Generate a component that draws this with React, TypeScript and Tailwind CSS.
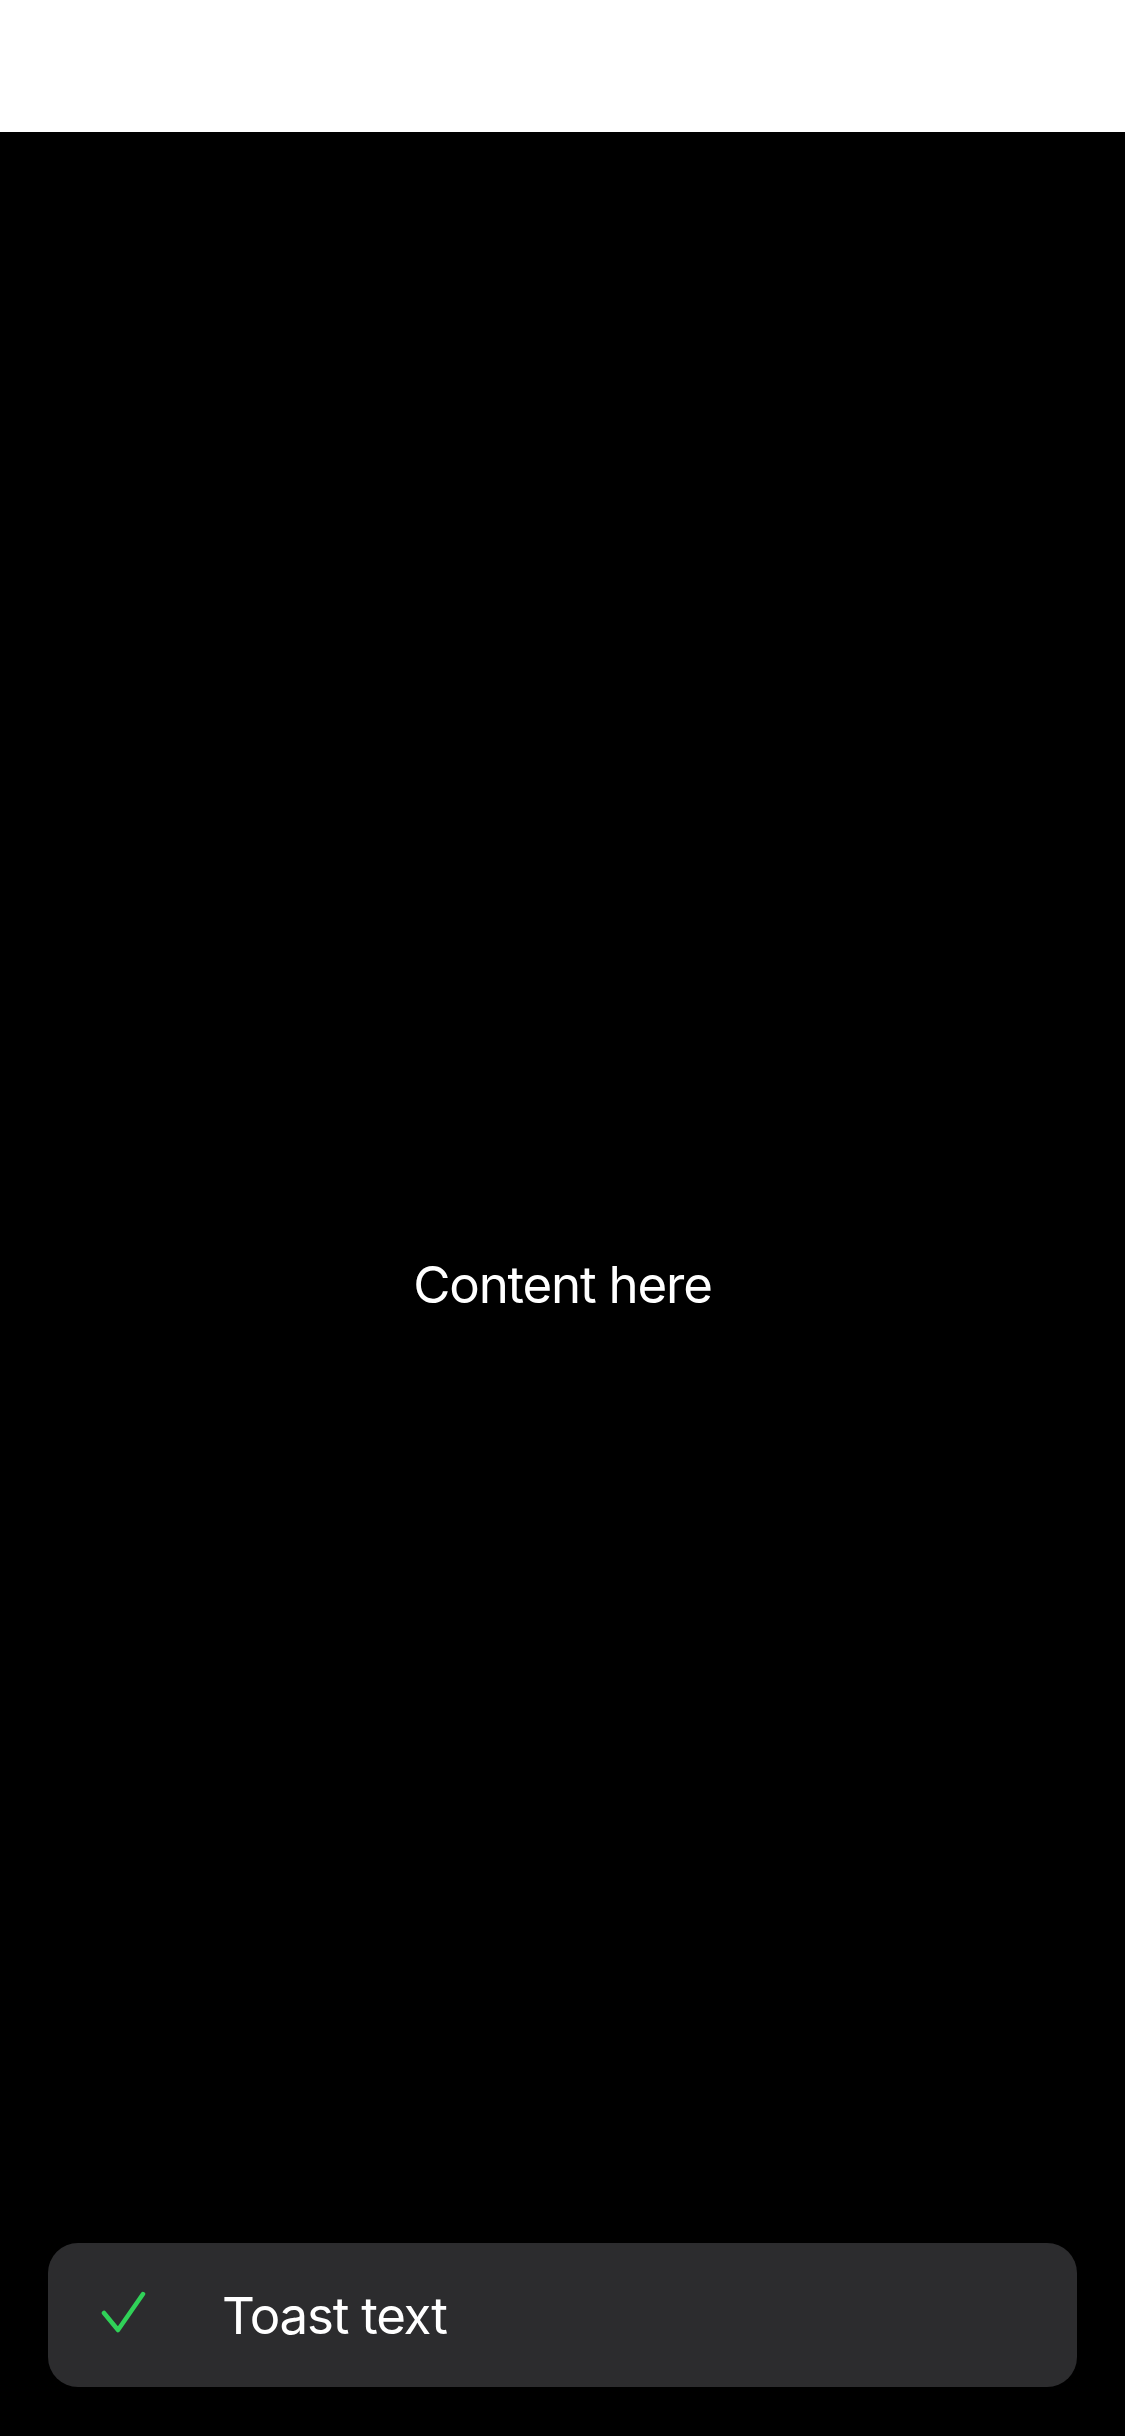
export default function App() {
  return (
    <div
      className="relative flex min-h-[2436px] flex-col bg-black"
      style={{ fontFamily: "Inter, 'Liberation Sans', sans-serif" }}
    >
      <div className="h-[132px] bg-white"></div>
      <main className="flex flex-1 items-center justify-center">
        <p className="text-[51px] leading-none tracking-[-0.024em] text-white">Content here</p>
      </main>

      {/* toast */}
      <div className="absolute bottom-[49px] left-[48px] right-[48px] flex h-[144px] items-center rounded-[30px] bg-[#2c2c2e]">
        <div className="ml-[52px] flex h-[48px] w-[48px] items-center justify-center">
          <svg width="48" height="48" viewBox="0 0 48 48" fill="none">
            <path
              d="M4 22 L18 39 L43 3"
              stroke="#30d158"
              strokeWidth="4.5"
              strokeLinecap="round"
              strokeLinejoin="round"
            />
          </svg>
        </div>
        <span className="ml-[74px] text-[51px] leading-none tracking-[-0.024em] text-white">Toast text</span>
      </div>
    </div>
  );
}
